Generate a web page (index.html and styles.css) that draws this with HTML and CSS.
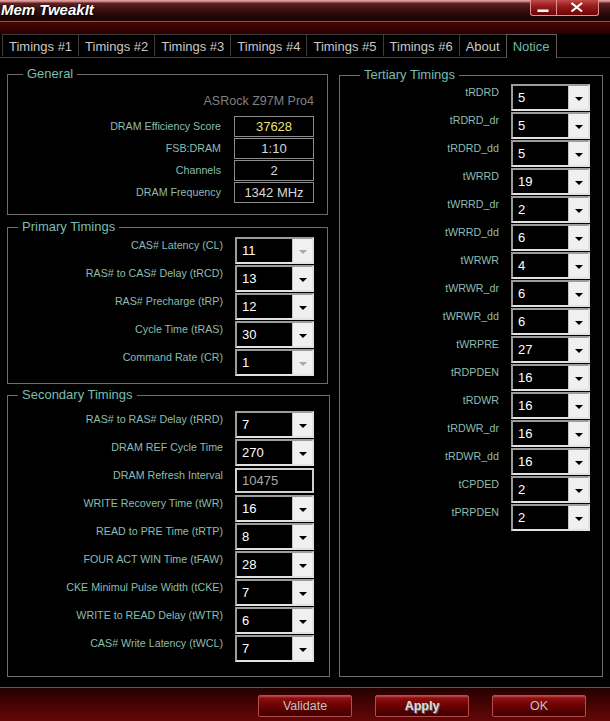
FILE: index.html
```html
<!DOCTYPE html>
<html>
<head>
<meta charset="utf-8">
<link rel="stylesheet" href="styles.css">
</head>
<body>
<div class="window">
  <div class="titlebar">
    <span class="title">Mem TweakIt</span>
    <div class="winbtns">
      <span class="wb wb-min"><svg width="24" height="15" viewBox="0 0 24 15"><rect x="6.5" y="9.5" width="11" height="2.5" fill="#fff"/></svg></span>
      <span class="wb wb-close"><svg width="41" height="15" viewBox="0 0 41 15"><path d="M14.5 3 L25 11.5 M25 3 L14.5 11.5" stroke="#fff" stroke-width="2.2" fill="none"/></svg></span>
    </div>
  </div>
  <div class="band"></div>
  <div class="tabs">
    <span class="tab">Timings #1</span>
    <span class="tab">Timings #2</span>
    <span class="tab">Timings #3</span>
    <span class="tab">Timings #4</span>
    <span class="tab">Timings #5</span>
    <span class="tab">Timings #6</span>
    <span class="tab">About</span>
    <span class="tab active">Notice</span>
  </div>
  <div class="content">
    <div class="main">
      <div class="leftcol">
        <fieldset class="group general">
          <legend>General</legend>
          <div class="model">ASRock Z97M Pro4</div>
          <div class="grows">
            <div class="grow"><span class="lbl">DRAM Efficiency Score</span><span class="vbox score">37628</span></div>
            <div class="grow"><span class="lbl">FSB:DRAM</span><span class="vbox">1:10</span></div>
            <div class="grow"><span class="lbl">Channels</span><span class="vbox">2</span></div>
            <div class="grow"><span class="lbl">DRAM Frequency</span><span class="vbox">1342 MHz</span></div>
          </div>
        </fieldset>
        <fieldset class="group primary">
          <legend>Primary Timings</legend>
          <div class="rows">
            <div class="row"><span class="lbl">CAS# Latency (CL)</span><div class="combo disabled"><span class="val">11</span><span class="btn"><i class="tri"></i></span></div></div>
            <div class="row"><span class="lbl">RAS# to CAS# Delay (tRCD)</span><div class="combo"><span class="val">13</span><span class="btn"><i class="tri"></i></span></div></div>
            <div class="row"><span class="lbl">RAS# Precharge (tRP)</span><div class="combo"><span class="val">12</span><span class="btn"><i class="tri"></i></span></div></div>
            <div class="row"><span class="lbl">Cycle Time (tRAS)</span><div class="combo"><span class="val">30</span><span class="btn"><i class="tri"></i></span></div></div>
            <div class="row"><span class="lbl">Command Rate (CR)</span><div class="combo disabled"><span class="val">1</span><span class="btn"><i class="tri"></i></span></div></div>
          </div>
        </fieldset>
        <fieldset class="group secondary">
          <legend>Secondary Timings</legend>
          <div class="rows">
            <div class="row"><span class="lbl">RAS# to RAS# Delay (tRRD)</span><div class="combo"><span class="val">7</span><span class="btn"><i class="tri"></i></span></div></div>
            <div class="row"><span class="lbl">DRAM REF Cycle Time</span><div class="combo"><span class="val">270</span><span class="btn"><i class="tri"></i></span></div></div>
            <div class="row"><span class="lbl">DRAM Refresh Interval</span><div class="tfield">10475</div></div>
            <div class="row"><span class="lbl">WRITE Recovery Time (tWR)</span><div class="combo"><span class="val">16</span><span class="btn"><i class="tri"></i></span></div></div>
            <div class="row"><span class="lbl">READ to PRE Time (tRTP)</span><div class="combo"><span class="val">8</span><span class="btn"><i class="tri"></i></span></div></div>
            <div class="row"><span class="lbl">FOUR ACT WIN Time (tFAW)</span><div class="combo"><span class="val">28</span><span class="btn"><i class="tri"></i></span></div></div>
            <div class="row"><span class="lbl">CKE Minimul Pulse Width (tCKE)</span><div class="combo"><span class="val">7</span><span class="btn"><i class="tri"></i></span></div></div>
            <div class="row"><span class="lbl">WRITE to READ Delay (tWTR)</span><div class="combo"><span class="val">6</span><span class="btn"><i class="tri"></i></span></div></div>
            <div class="row"><span class="lbl">CAS# Write Latency (tWCL)</span><div class="combo"><span class="val">7</span><span class="btn"><i class="tri"></i></span></div></div>
          </div>
        </fieldset>
      </div>
      <fieldset class="group tertiary">
        <legend>Tertiary Timings</legend>
        <div class="rows">
          <div class="row"><span class="lbl">tRDRD</span><div class="combo"><span class="val">5</span><span class="btn"><i class="tri"></i></span></div></div>
          <div class="row"><span class="lbl">tRDRD_dr</span><div class="combo"><span class="val">5</span><span class="btn"><i class="tri"></i></span></div></div>
          <div class="row"><span class="lbl">tRDRD_dd</span><div class="combo"><span class="val">5</span><span class="btn"><i class="tri"></i></span></div></div>
          <div class="row"><span class="lbl">tWRRD</span><div class="combo"><span class="val">19</span><span class="btn"><i class="tri"></i></span></div></div>
          <div class="row"><span class="lbl">tWRRD_dr</span><div class="combo"><span class="val">2</span><span class="btn"><i class="tri"></i></span></div></div>
          <div class="row"><span class="lbl">tWRRD_dd</span><div class="combo"><span class="val">6</span><span class="btn"><i class="tri"></i></span></div></div>
          <div class="row"><span class="lbl">tWRWR</span><div class="combo"><span class="val">4</span><span class="btn"><i class="tri"></i></span></div></div>
          <div class="row"><span class="lbl">tWRWR_dr</span><div class="combo"><span class="val">6</span><span class="btn"><i class="tri"></i></span></div></div>
          <div class="row"><span class="lbl">tWRWR_dd</span><div class="combo"><span class="val">6</span><span class="btn"><i class="tri"></i></span></div></div>
          <div class="row"><span class="lbl">tWRPRE</span><div class="combo"><span class="val">27</span><span class="btn"><i class="tri"></i></span></div></div>
          <div class="row"><span class="lbl">tRDPDEN</span><div class="combo"><span class="val">16</span><span class="btn"><i class="tri"></i></span></div></div>
          <div class="row"><span class="lbl">tRDWR</span><div class="combo"><span class="val">16</span><span class="btn"><i class="tri"></i></span></div></div>
          <div class="row"><span class="lbl">tRDWR_dr</span><div class="combo"><span class="val">16</span><span class="btn"><i class="tri"></i></span></div></div>
          <div class="row"><span class="lbl">tRDWR_dd</span><div class="combo"><span class="val">16</span><span class="btn"><i class="tri"></i></span></div></div>
          <div class="row"><span class="lbl">tCPDED</span><div class="combo"><span class="val">2</span><span class="btn"><i class="tri"></i></span></div></div>
          <div class="row"><span class="lbl">tPRPDEN</span><div class="combo"><span class="val">2</span><span class="btn"><i class="tri"></i></span></div></div>
        </div>
      </fieldset>
    </div>
  </div>
  <div class="footer">
    <span class="fbtn">Validate</span>
    <span class="fbtn apply">Apply</span>
    <span class="fbtn">OK</span>
  </div>
</div>
</body>
</html>
```
FILE: styles.css
```css
html, body {
  margin: 0;
  padding: 0;
  background: #000;
}
body {
  font-family: "Liberation Sans", Arial, sans-serif;
}
.window {
  width: 610px;
  height: 721px;
  overflow: hidden;
  background: #000;
}
.titlebar {
  height: 21px;
  border-bottom: 1px solid #9a4848;
  background: linear-gradient(to bottom, #e8aaaa 0, #c07070 2px, #5e2424 3px, #3e1212 9px, #220606 16px, #1c0404 21px);
  display: flex;
  justify-content: space-between;
  align-items: flex-start;
}
.title {
  font-style: italic;
  font-weight: bold;
  font-size: 15px;
  line-height: 20px;
  color: #fff;
  padding-left: 1px;
  text-shadow: 0 0 2px #000, 1px 1px 1px #000;
}
.winbtns {
  display: flex;
  margin-right: 11px;
}
.wb {
  display: block;
  height: 16px;
  box-sizing: border-box;
  border: 1px solid #e09090;
  border-top: none;
  background: linear-gradient(to bottom, #c04a4a 0, #9a1c1c 40%, #6a0404 100%);
}
.wb svg {
  display: block;
}
.wb-min {
  width: 26px;
  border-radius: 0 0 0 3px;
  border-right: none;
}
.wb-close {
  width: 43px;
  border-radius: 0 0 3px 0;
}
.band {
  height: 12px;
  background: linear-gradient(to bottom, #4a0404, #360000 60%, #2a0000);
}
.tabs {
  display: flex;
  height: 23px;
  padding-left: 2px;
  border-bottom: 1px solid #444;
  background: #000;
}
.tab {
  display: block;
  height: 22px;
  box-sizing: border-box;
  border: 1px solid #3c3c3c;
  border-bottom: none;
  margin-left: -1px;
  padding: 2px 6px 0 6px;
  font-size: 13px;
  line-height: 20px;
  color: #c8c8c8;
  white-space: nowrap;
}
.tab:first-child {
  margin-left: 0;
}
.tab.active {
  height: 24px;
  margin-bottom: -1px;
  border-color: #5c5c5c;
  background: #000;
  color: #72b8a8;
}
.content {
  padding: 9px 0 10px 7px;
  border-bottom: 1px solid #5a5a5a;
}
.main {
  display: flex;
  align-items: stretch;
  gap: 9px;
}
.leftcol {
  width: 323px;
  display: flex;
  flex-direction: column;
  align-items: flex-start;
}
.group {
  margin: 0;
  padding: 0;
  border: 1px solid #6c6c6c;
  box-sizing: border-box;
  min-width: 0;
}
.group legend {
  font-size: 13px;
  line-height: 14px;
  color: #7cbcac;
  padding: 0 4px;
}
.general {
  width: 321px;
  padding: 0 13px 11px 0;
}
.general legend {
  margin-left: 15px;
}
.primary {
  width: 321px;
  margin-top: 5px;
  padding: 3px 13px 7px 0;
}
.primary legend,
.secondary legend {
  margin-left: 10px;
}
.secondary {
  width: 323px;
  margin-top: 4px;
  padding: 9px 15px 14px 0;
}
.tertiary {
  width: 264px;
  margin-top: 1px;
  padding: 2px 12px 0 0;
}
.tertiary legend {
  margin-left: 20px;
}
.model {
  margin-top: 11px;
  line-height: 18px;
  text-align: right;
  font-size: 12.5px;
  color: #808080;
}
.grows {
  margin-top: 6px;
  display: flex;
  flex-direction: column;
  gap: 1px;
}
.grow {
  display: flex;
  justify-content: flex-end;
  align-items: center;
  height: 21px;
}
.lbl {
  font-size: 10.7px;
  line-height: 13px;
  color: #8cbcb0;
  white-space: nowrap;
  margin-right: 12px;
}
.grow .lbl {
  margin-right: 13px;
}
.vbox {
  width: 80px;
  height: 21px;
  box-sizing: border-box;
  border: 1px solid #8c8c8c;
  text-align: center;
  line-height: 19px;
  font-size: 13px;
  color: #d8d8d8;
}
.vbox.score {
  color: #ece27a;
}
.rows {
  display: flex;
  flex-direction: column;
  gap: 1px;
}
.row {
  display: flex;
  justify-content: flex-end;
  align-items: flex-start;
  height: 27px;
}
.row .lbl {
  padding-top: 2px;
}
.combo {
  width: 79px;
  height: 27px;
  box-sizing: border-box;
  border: 2px solid;
  border-color: #9c9c9c #e2e2e2 #e2e2e2 #9c9c9c;
  display: flex;
  background: #000;
}
.combo .val {
  flex: 1;
  color: #fff;
  font-size: 13px;
  line-height: 23px;
  padding-left: 5px;
}
.combo .btn {
  width: 19px;
  background: #f0f0f0;
  border-left: 1px solid #c4c4c4;
  display: flex;
  align-items: center;
  justify-content: center;
}
.tri {
  display: block;
  width: 0;
  height: 0;
  border-left: 4px solid transparent;
  border-right: 4px solid transparent;
  border-top: 4px solid #000;
  margin-top: 3px;
}
.combo.disabled .tri {
  border-top-color: #a8a8a8;
}
.tfield {
  width: 79px;
  height: 25px;
  margin-top: 1px;
  box-sizing: border-box;
  border: 2px solid #d0d0d0;
  color: #a8a8a8;
  font-size: 13px;
  line-height: 21px;
  padding-left: 5px;
}
.footer {
  height: 33px;
  box-sizing: border-box;
  padding: 7px 24px 0 0;
  display: flex;
  justify-content: flex-end;
  gap: 23px;
  background: linear-gradient(to bottom, #240000 0, #400202 40%, #640808 100%);
}
.fbtn {
  display: block;
  width: 94px;
  height: 22px;
  box-sizing: border-box;
  border: 1px solid #b44e4e;
  border-radius: 2px;
  background: linear-gradient(to bottom, #c44848 0, #8c1010 2px, #6a0202 50%, #3e0000 100%);
  color: #c2c2c2;
  font-size: 12.5px;
  line-height: 20px;
  text-align: center;
}
.fbtn.apply {
  font-weight: bold;
  color: #dcdcdc;
  text-shadow: 1px 1px 0 #6a6a6a;
}
```
